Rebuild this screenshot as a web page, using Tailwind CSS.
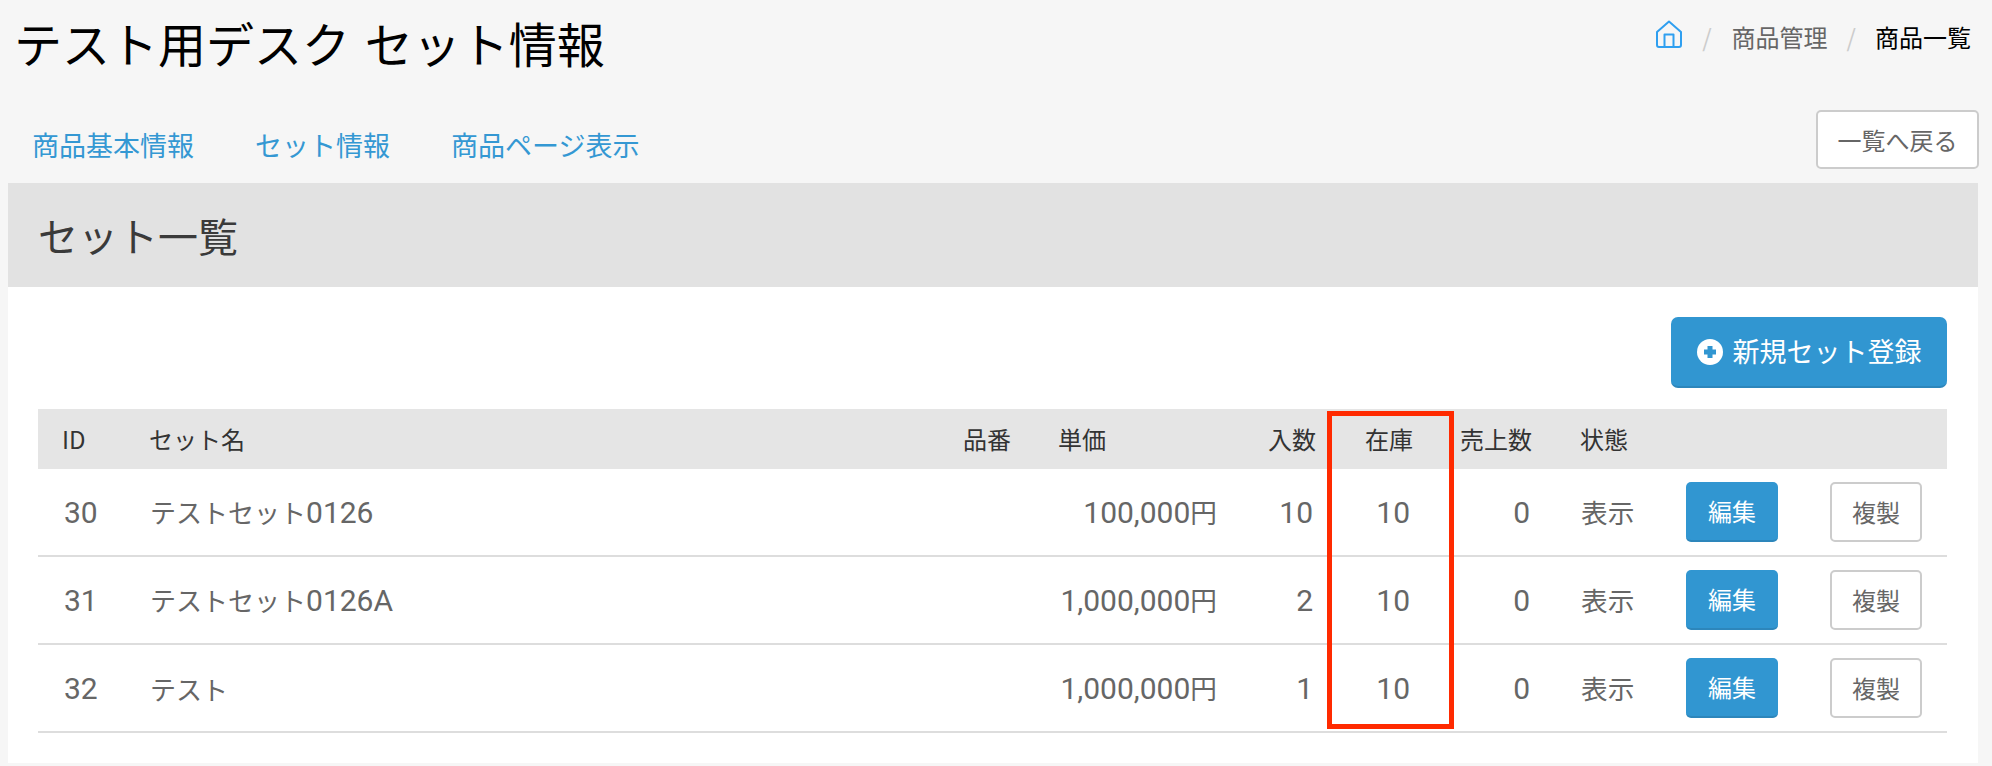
<!DOCTYPE html>
<html lang="ja">
<head>
  <meta charset="UTF-8" />
  <title>テスト用デスク セット情報</title>
  <script src="https://cdn.jsdelivr.net/npm/@tailwindcss/browser@4"></script>
</head>
<body class="bg-[#f6f6f6] font-['Noto_Sans_CJK_JP',sans-serif] h-[766px] overflow-hidden">

  <!-- Header -->
  <header class="h-[110px] flex justify-between items-start pl-[14px] pr-[21px]">
    <h1 class="text-[48px] leading-[56px] mt-[14px] text-black font-normal [word-spacing:4px]">テスト用デスク セット情報</h1>
    <nav class="flex items-center mt-[18px] h-[38px] text-[24px]">
      <a href="#" class="text-[#2f9ff0] -mt-[6px]">
        <svg class="w-[26px] h-[28px]" viewBox="0 0 26 28" fill="none" stroke="currentColor" stroke-width="2" stroke-linejoin="round">
          <path d="M1 12 L13 1.5 L25 12 V25 Q25 27 23 27 H3 Q1 27 1 25 Z" />
          <path d="M8.5 27 V14.5 H17.5 V27" />
        </svg>
      </a>
      <span class="ml-[20px] text-[#cccccc]">/</span>
      <a href="#" class="ml-[20px] text-[#666666]">商品管理</a>
      <span class="ml-[19px] text-[#cccccc]">/</span>
      <span class="ml-[19px] text-black">商品一覧</span>
    </nav>
  </header>

  <!-- Tabs -->
  <div class="h-[73px] flex justify-between items-start pl-[32px] pr-[13px]">
    <div class="flex gap-[61px] text-[27px] leading-[40px] mt-[15px] text-[#3498d3]">
      <a href="#">商品基本情報</a>
      <a href="#">セット情報</a>
      <a href="#">商品ページ表示</a>
    </div>
    <a href="#" class="w-[163px] h-[59px] flex items-center justify-center bg-white border-2 border-[#cccccc] rounded-[5px] text-[24px] text-[#666666]">一覧へ戻る</a>
  </div>

  <!-- Panel -->
  <section class="ml-[8px] mr-[14px] bg-white">
    <div class="h-[104px] bg-[#e2e2e2] flex items-center pl-[30px]">
      <h2 class="text-[40px] text-[#3a3a3a] font-normal">セット一覧</h2>
    </div>
    <div class="pt-[30px] pb-[30px] pl-[30px] pr-[31px]">
      <div class="flex justify-end mb-[21px]">
        <a href="#" class="w-[276px] h-[71px] flex items-center justify-center gap-[10px] bg-[#3196d1] border-b-2 border-[#2d86bb] rounded-[7px] text-[27px] text-white">
          <svg class="w-[26px] h-[26px]" viewBox="0 0 26 26">
            <circle cx="13" cy="13" r="13" fill="#ffffff" />
            <path d="M13 7 V19 M7 13 H19" stroke="#3196d1" stroke-width="5" />
          </svg>
          新規セット登録
        </a>
      </div>

      <div class="relative">
        <table class="w-full table-fixed border-separate border-spacing-0 text-[26.67px] text-[#666666]">
          <colgroup>
            <col class="w-[88px]" /><col class="w-[813px]" /><col class="w-[95px]" /><col class="w-[210px]" /><col class="w-[96px]" />
            <col class="w-[96px]" /><col class="w-[121px]" /><col class="w-[105px]" /><col class="w-[141px]" /><col class="w-[144px]" />
          </colgroup>
          <thead>
            <tr class="h-[60px] bg-[#e5e5e5] text-[24px] text-[#333333] text-left">
              <th class="pl-[24px] font-normal">ID</th>
              <th class="pl-[23px] font-normal">セット名</th>
              <th class="pl-[24px] font-normal">品番</th>
              <th class="pl-[24px] font-normal">単価</th>
              <th class="pl-[24px] font-normal">入数</th>
              <th class="pl-[25px] font-normal">在庫</th>
              <th class="pl-[24px] font-normal">売上数</th>
              <th class="pl-[23px] font-normal">状態</th>
              <th></th>
              <th></th>
            </tr>
          </thead>
          <tbody class="[&_td]:border-b-2 [&_td]:border-[#dddddd]">
            <tr class="h-[88px]">
              <td class="pl-[26px] text-[30px] font-['Roboto']">30</td>
              <td class="pl-[24px] text-[26px]">テストセット<span class="text-[30px] font-['Roboto']">0126</span></td>
              <td></td>
              <td class="text-right pr-[27px]"><span class="text-[30px] font-['Roboto']">100,000</span>円</td>
              <td class="text-right pr-[27px] text-[30px] font-['Roboto']">10</td>
              <td class="text-right pr-[26px] text-[30px] font-['Roboto']">10</td>
              <td class="text-right pr-[27px] text-[30px] font-['Roboto']">0</td>
              <td class="pl-[24px]">表示</td>
              <td class="pl-[24px]"><a href="#" class="w-[92px] h-[60px] flex items-center justify-center bg-[#3196d1] border-b-2 border-[#2d86bb] rounded-[5px] text-[24px] text-white">編集</a></td>
              <td class="pl-[27px]"><a href="#" class="w-[92px] h-[60px] flex items-center justify-center bg-white border-2 border-[#cccccc] rounded-[5px] text-[24px] text-[#666666]">複製</a></td>
            </tr>
            <tr class="h-[88px]">
              <td class="pl-[26px] text-[30px] font-['Roboto']">31</td>
              <td class="pl-[24px] text-[26px]">テストセット<span class="text-[30px] font-['Roboto']">0126A</span></td>
              <td></td>
              <td class="text-right pr-[27px]"><span class="text-[30px] font-['Roboto']">1,000,000</span>円</td>
              <td class="text-right pr-[27px] text-[30px] font-['Roboto']">2</td>
              <td class="text-right pr-[26px] text-[30px] font-['Roboto']">10</td>
              <td class="text-right pr-[27px] text-[30px] font-['Roboto']">0</td>
              <td class="pl-[24px]">表示</td>
              <td class="pl-[24px]"><a href="#" class="w-[92px] h-[60px] flex items-center justify-center bg-[#3196d1] border-b-2 border-[#2d86bb] rounded-[5px] text-[24px] text-white">編集</a></td>
              <td class="pl-[27px]"><a href="#" class="w-[92px] h-[60px] flex items-center justify-center bg-white border-2 border-[#cccccc] rounded-[5px] text-[24px] text-[#666666]">複製</a></td>
            </tr>
            <tr class="h-[88px]">
              <td class="pl-[26px] text-[30px] font-['Roboto']">32</td>
              <td class="pl-[24px] text-[26px]">テスト</td>
              <td></td>
              <td class="text-right pr-[27px]"><span class="text-[30px] font-['Roboto']">1,000,000</span>円</td>
              <td class="text-right pr-[27px] text-[30px] font-['Roboto']">1</td>
              <td class="text-right pr-[26px] text-[30px] font-['Roboto']">10</td>
              <td class="text-right pr-[27px] text-[30px] font-['Roboto']">0</td>
              <td class="pl-[24px]">表示</td>
              <td class="pl-[24px]"><a href="#" class="w-[92px] h-[60px] flex items-center justify-center bg-[#3196d1] border-b-2 border-[#2d86bb] rounded-[5px] text-[24px] text-white">編集</a></td>
              <td class="pl-[27px]"><a href="#" class="w-[92px] h-[60px] flex items-center justify-center bg-white border-2 border-[#cccccc] rounded-[5px] text-[24px] text-[#666666]">複製</a></td>
            </tr>
          </tbody>
        </table>
        <!-- Red annotation box -->
        <div class="absolute left-[1289px] top-[2px] w-[127px] h-[318px] border-[5px] border-[#ff2a00]"></div>
      </div>
    </div>
  </section>

</body>
</html>
